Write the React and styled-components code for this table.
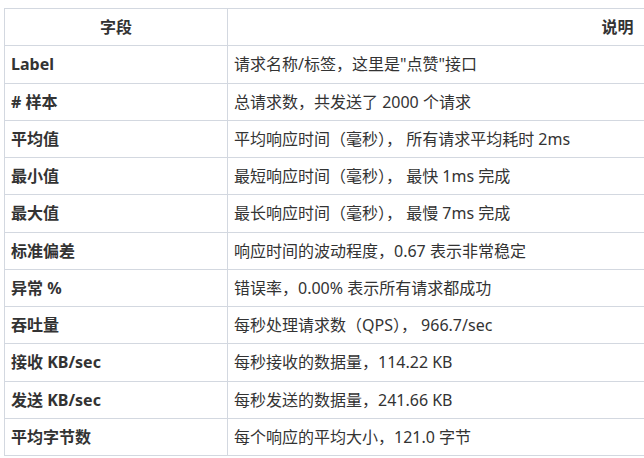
import React from 'react'
import styled, { createGlobalStyle } from 'styled-components'

const Global = createGlobalStyle`
  html, body {
    margin: 0;
    overflow: hidden;
    background: #fff;
  }
  body {
    font-family: "Noto Sans", "Noto Sans CJK SC", sans-serif;
    color: #333;
  }
`

const Page = styled.div`
  padding: 8px 0 0 4px;
  width: 1100px;
`

const Table = styled.table`
  border-collapse: collapse;
  table-layout: fixed;
  width: 1004px;
  font-size: 16px;
  col.field { width: 223px; }
  th, td {
    border: 1px solid #d3d8e0;
    padding: 6px 6px;
    line-height: 24.25px;
    white-space: nowrap;
  }
  th {
    font-weight: bold;
    text-align: center;
  }
  td {
    text-align: left;
  }
`

const FieldCell = styled.td`
  font-weight: bold;
`

const rows = [
  ['Label', '请求名称/标签，这里是"点赞"接口'],
  ['# 样本', '总请求数，共发送了 2000 个请求'],
  ['平均值', '平均响应时间（毫秒）， 所有请求平均耗时 2ms'],
  ['最小值', '最短响应时间（毫秒）， 最快 1ms 完成'],
  ['最大值', '最长响应时间（毫秒）， 最慢 7ms 完成'],
  ['标准偏差', '响应时间的波动程度，0.67 表示非常稳定'],
  ['异常 %', '错误率，0.00% 表示所有请求都成功'],
  ['吞吐量', '每秒处理请求数（QPS）， 966.7/sec'],
  ['接收 KB/sec', '每秒接收的数据量，114.22 KB'],
  ['发送 KB/sec', '每秒发送的数据量，241.66 KB'],
  ['平均字节数', '每个响应的平均大小，121.0 字节'],
]

export default function App() {
  return (
    <Page>
      <Global />
      <Table>
        <colgroup>
          <col className='field' />
          <col />
        </colgroup>
        <thead>
          <tr>
            <th>字段</th>
            <th>说明</th>
          </tr>
        </thead>
        <tbody>
          {rows.map(([field, desc]) => (
            <tr key={field}>
              <FieldCell>{field}</FieldCell>
              <td>{desc}</td>
            </tr>
          ))}
        </tbody>
      </Table>
    </Page>
  )
}
